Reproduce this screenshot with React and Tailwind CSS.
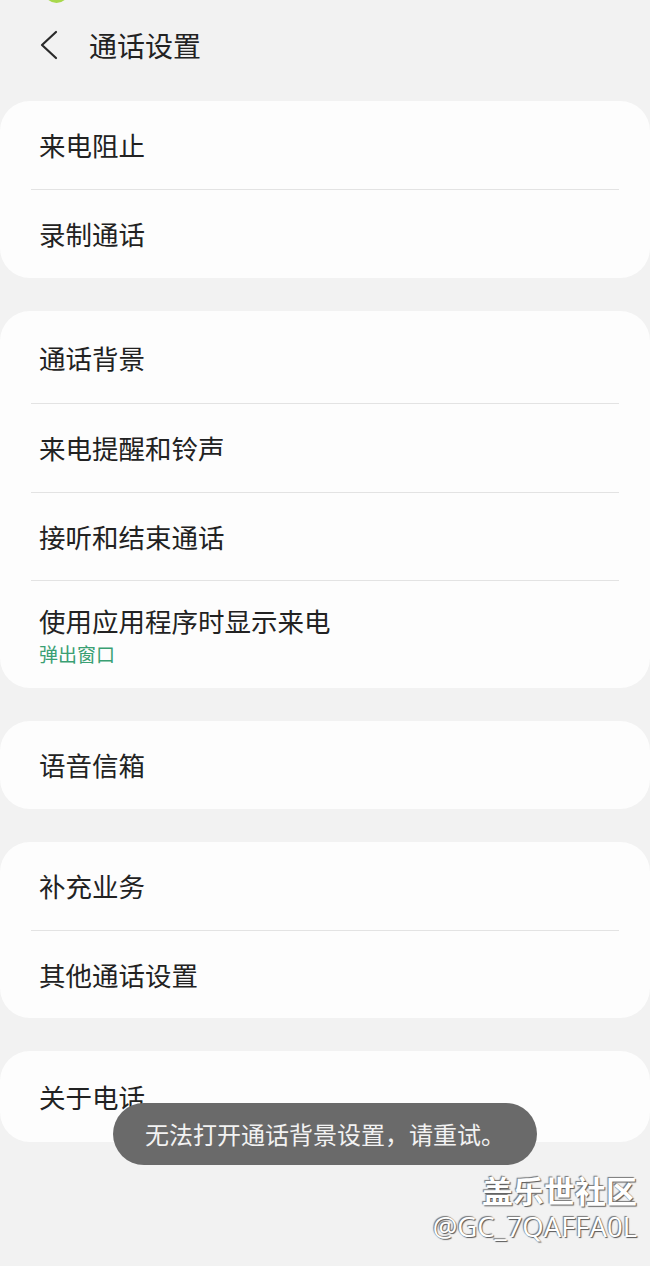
import React from 'react'

const font = { fontFamily: '"Noto Sans CJK SC", "Noto Sans", sans-serif' }

const groups = [
  [{ title: '来电阻止' }, { title: '录制通话' }],
  [
    { title: '通话背景', h: 'h-[92px] pt-[2px]' },
    { title: '来电提醒和铃声' },
    { title: '接听和结束通话', h: 'h-[87px]' },
    { title: '使用应用程序时显示来电', sub: '弹出窗口', h: 'h-[107px] pt-[1px]' },
  ],
  [{ title: '语音信箱' }],
  [{ title: '补充业务' }, { title: '其他通话设置', h: 'h-[87px]' }],
  [{ title: '关于电话', h: 'h-[91px]' }],
]

function Row({ item, last }) {
  return (
    <div>
      <div className={`flex flex-col justify-center px-[39px] ${item.h || 'h-[88px]'}`}>
        <div className="text-[26.5px] leading-[38px] text-[#222]">{item.title}</div>
        {item.sub && <div className="text-[19px] leading-[28px] text-[#3a9f73]">{item.sub}</div>}
      </div>
      {!last && <div className="mx-[31px] h-px bg-[#e3e3e3]" />}
    </div>
  )
}

export default function App() {
  return (
    <div className="relative min-h-[1266px] w-[650px] overflow-hidden bg-[#f2f2f2]" style={font}>
      <div className="absolute left-[44px] top-[-22px] h-[25px] w-[25px] rounded-full bg-[#a8d84c]" />

      <div className="flex h-[90px] items-center">
        <svg className="ml-[38px]" width="22" height="30" viewBox="0 0 22 30" fill="none">
          <path d="M18 2 L4 15 L18 28" stroke="#2a2a2a" strokeWidth="2.2" strokeLinecap="round" strokeLinejoin="round" />
        </svg>
        <div className="ml-[29px] text-[28px] leading-[38px] text-[#222]">通话设置</div>
      </div>

      <div className="mt-[11px] flex flex-col gap-[33px]">
        {groups.map((g, i) => (
          <div key={i} className="rounded-[30px] bg-[#fdfdfd]">
            {g.map((item, j) => (
              <Row key={j} item={item} last={j === g.length - 1} />
            ))}
          </div>
        ))}
      </div>

      <div className="absolute left-[113px] top-[1103px] flex h-[62px] w-[424px] items-center justify-center rounded-full bg-[#6a6a6a]">
        <span className="text-[24px] leading-[34px] text-[#f2f2f2]">无法打开通话背景设置，请重试。</span>
      </div>

      <div className="absolute right-[13px] top-[1170px] flex flex-col items-end">
        <div className="text-[31px] font-bold leading-[40px] text-white [text-shadow:1px_1px_1px_#555,-1px_-1px_1px_#777]">盖乐世社区</div>
        <div className="text-[27.5px] leading-[34px] text-white [text-shadow:1px_1px_1px_#555,-1px_-1px_1px_#777]" style={{ fontFamily: '"Open Sans", "Noto Sans", sans-serif' }}>@GC_7QAFFA0L</div>
      </div>
    </div>
  )
}
